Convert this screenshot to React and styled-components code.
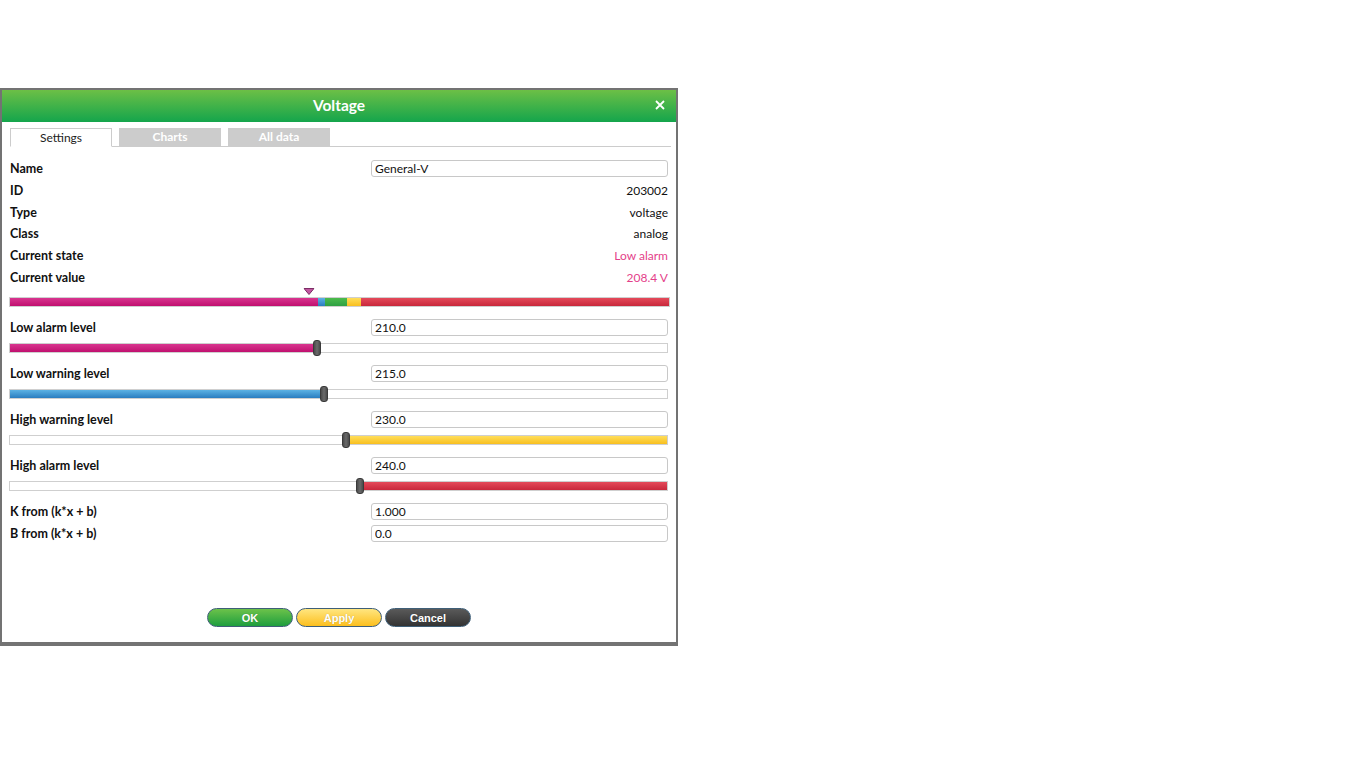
import React from "react";
import styled, { createGlobalStyle } from "styled-components";

const Global = createGlobalStyle`
  html, body { margin: 0; padding: 0; background: #fff; }
  body { font-family: Lato, "Open Sans", "Liberation Sans", sans-serif; color: #111; }
  * { box-sizing: border-box; }
`;

const MIN = -5;
const MAX = 455;
const frac = (v) => ((v - MIN) / (MAX - MIN)) * 100;

const Dialog = styled.div`
  margin-top: 88px;
  width: 678px;
  height: 558px;
  border: 2px solid #737373;
  border-bottom-width: 4px;
  background: #fff;
  display: flex;
  flex-direction: column;
`;

const Header = styled.div`
  height: 32px;
  flex: none;
  background: linear-gradient(#6cbf46, #14a54c);
  display: flex;
  align-items: center;
  justify-content: center;
  position: relative;
  color: #fff;
  font-weight: 700;
  font-size: 15.5px;
  padding-bottom: 3px;
`;

const Close = styled.button`
  position: absolute;
  right: 11px;
  top: 10px;
  width: 10px;
  height: 10px;
  padding: 0;
  border: 0;
  background: none;
  display: flex;
`;

const Tabs = styled.div`
  display: flex;
  gap: 7px;
  margin: 6px 5px 0 8px;
  border-bottom: 1px solid #cccccc;
  height: 19px;
`;

const Tab = styled.div`
  width: 102px;
  height: 19px;
  display: flex;
  align-items: center;
  justify-content: center;
  font-size: 12px;
  padding-bottom: 1px;
  ${(p) =>
    p.$active
      ? `background:#fff;border:1px solid #cccccc;border-bottom:1px solid #fff;color:#222;`
      : `background:#cccccc;color:#fff;height:18px;font-weight:700;`}
`;

const Body = styled.div`
  flex: 1;
  padding: 11px 8px 0 8px;
  display: flex;
  flex-direction: column;
`;

const InfoRow = styled.div`
  height: 21.7px;
  display: flex;
  align-items: center;
  justify-content: space-between;
  font-size: 12px;
`;

const Label = styled.span`
  font-weight: 700;
  font-size: 12.5px;
  color: #111;
`;

const Value = styled.span`
  color: ${(p) => (p.$alert ? "#e43f8a" : "#111")};
`;

const Input = styled.input`
  width: 297px;
  height: 17px;
  border: 1px solid #c8c8c8;
  border-radius: 3px;
  padding: 0 3px;
  font-family: inherit;
  font-size: 12px;
  color: #111;
  outline: none;
`;

const StateBar = styled.div`
  position: relative;
  margin: 6px -2px 0 -1px;
  padding-top: 3px;
`;

const Marker = styled.svg`
  position: absolute;
  top: -6px;
  width: 11px;
  height: 7px;
  transform: translateX(-50%);
`;

const Track = styled.div`
  height: 10px;
  border: 1px solid #cfcfcf;
  display: flex;
  background: #fff;
  position: relative;
`;

const Seg = styled.div`
  height: 100%;
  background: ${(p) => p.$bg};
`;

const Level = styled.div`
  display: flex;
  flex-direction: column;
  gap: 2px;
  margin-bottom: 6px;
`;

const LevelRow = styled.div`
  height: 22px;
  display: flex;
  align-items: center;
  justify-content: space-between;
  font-size: 12px;
`;

const SliderWrap = styled.div`
  height: 16px;
  display: flex;
  align-items: center;
  margin-left: -1px;
`;

const SliderTrack = styled.div`
  flex: 1;
  height: 10px;
  border: 1px solid #cfcfcf;
  background: #fff;
  position: relative;
`;

const Fill = styled.div`
  position: absolute;
  top: 0;
  bottom: 0;
  background: ${(p) => p.$bg};
`;

const Thumb = styled.div`
  position: absolute;
  top: -4px;
  width: 8px;
  height: 16px;
  border-radius: 3px;
  background: linear-gradient(90deg, #4a4a4a, #6a6a6a 50%, #4a4a4a);
  border: 1px solid #3a3a3a;
  transform: translateX(-50%);
`;

const Footer = styled.div`
  display: flex;
  justify-content: center;
  gap: 3px;
  padding: 0 0 15px 0;
`;

const Btn = styled.button`
  width: 86px;
  height: 19px;
  border-radius: 10px;
  border: 1px solid #3f5f78;
  background: ${(p) => p.$bg};
  color: #fff;
  font-family: "Liberation Sans", Arial, sans-serif;
  font-weight: 700;
  font-size: 11px;
  padding: 0;
  text-shadow: 0 0 1px rgba(0, 0, 0, 0.25);
`;

const GRAD = {
  magenta: "linear-gradient(#d8358f, #c0106f)",
  blue: "linear-gradient(#5cb2e4, #2a7dc0)",
  green: "linear-gradient(#4cbb4c, #2ea043)",
  yellow: "linear-gradient(#ffde5a, #f8bf1f)",
  red: "linear-gradient(#e44a5a, #c8283c)",
};

const levels = [
  { label: "Low alarm level", value: 210, bg: GRAD.magenta, dir: "low" },
  { label: "Low warning level", value: 215, bg: GRAD.blue, dir: "low" },
  { label: "High warning level", value: 230, bg: GRAD.yellow, dir: "high" },
  { label: "High alarm level", value: 240, bg: GRAD.red, dir: "high" },
];

function Slider({ value, bg, dir }) {
  const p = frac(value);
  return (
    <SliderWrap>
      <SliderTrack>
        {dir === "low" ? (
          <Fill $bg={bg} style={{ left: 0, width: `${p}%` }} />
        ) : (
          <Fill $bg={bg} style={{ left: `${p}%`, right: 0 }} />
        )}
        <Thumb style={{ left: `${p}%` }} />
      </SliderTrack>
    </SliderWrap>
  );
}

export default function App() {
  const segs = [
    { w: frac(210), bg: GRAD.magenta },
    { w: frac(215) - frac(210), bg: GRAD.blue },
    { w: frac(230) - frac(215), bg: GRAD.green },
    { w: frac(240) - frac(230), bg: GRAD.yellow },
    { w: 100 - frac(240), bg: GRAD.red },
  ];
  return (
    <>
      <Global />
      <Dialog>
        <Header>
          Voltage
          <Close aria-label="close">
            <svg width="10" height="10" viewBox="0 0 10 10">
              <path d="M1 1L9 9M9 1L1 9" stroke="#fff" strokeWidth="1.8" />
            </svg>
          </Close>
        </Header>
        <Tabs>
          <Tab $active>Settings</Tab>
          <Tab>Charts</Tab>
          <Tab>All data</Tab>
        </Tabs>
        <Body>
          <InfoRow>
            <Label>Name</Label>
            <Input defaultValue="General-V" />
          </InfoRow>
          <InfoRow>
            <Label>ID</Label>
            <Value>203002</Value>
          </InfoRow>
          <InfoRow>
            <Label>Type</Label>
            <Value>voltage</Value>
          </InfoRow>
          <InfoRow>
            <Label>Class</Label>
            <Value>analog</Value>
          </InfoRow>
          <InfoRow>
            <Label>Current state</Label>
            <Value $alert>Low alarm</Value>
          </InfoRow>
          <InfoRow>
            <Label>Current value</Label>
            <Value $alert>208.4 V</Value>
          </InfoRow>
          <StateBar>
            <Marker viewBox="0 0 11 7" style={{ left: "45.4%" }}>
              <path d="M0.5 0.5H10.5L5.5 6.5Z" fill="#c0559f" stroke="#7d2d66" strokeWidth="1" />
            </Marker>
            <Track>
              {segs.map((s, i) => (
                <Seg key={i} $bg={s.bg} style={{ width: `${s.w}%` }} />
              ))}
            </Track>
          </StateBar>
          <div style={{ height: 9 }} />
          {levels.map((l) => (
            <Level key={l.label}>
              <LevelRow>
                <Label>{l.label}</Label>
                <Input defaultValue={l.value.toFixed(1)} />
              </LevelRow>
              <Slider value={l.value} bg={l.bg} dir={l.dir} />
            </Level>
          ))}
          <LevelRow>
            <Label>K from (k*x + b)</Label>
            <Input defaultValue="1.000" />
          </LevelRow>
          <LevelRow>
            <Label>B from (k*x + b)</Label>
            <Input defaultValue="0.0" />
          </LevelRow>
        </Body>
        <Footer>
          <Btn $bg="linear-gradient(#6cc24a, #1e9e3e)">OK</Btn>
          <Btn $bg="linear-gradient(#ffe680, #fcbf1e)">Apply</Btn>
          <Btn $bg="linear-gradient(#5a5a5a, #333)">Cancel</Btn>
        </Footer>
      </Dialog>
    </>
  );
}
